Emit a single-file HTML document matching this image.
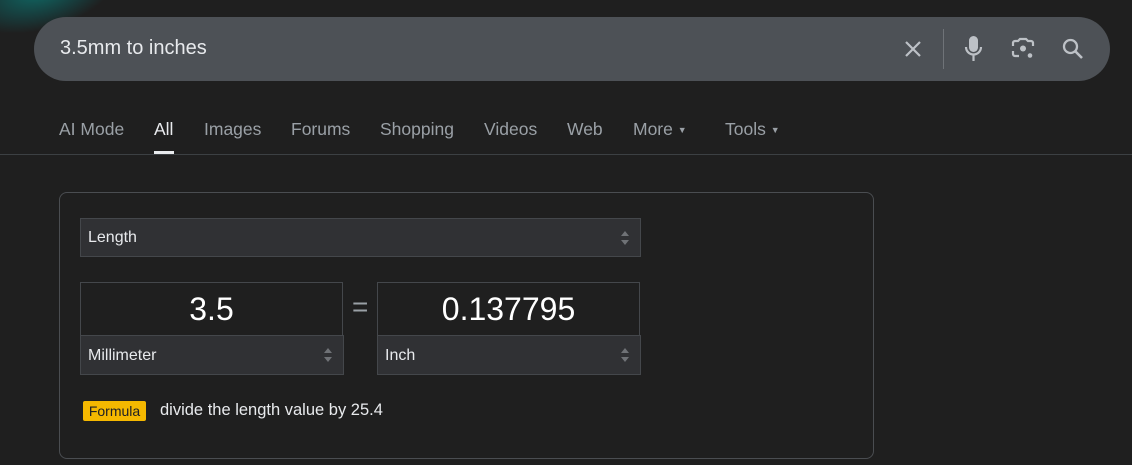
<!DOCTYPE html>
<html><head><style>
*{margin:0;padding:0;box-sizing:border-box}
body{width:1132px;height:465px;background:#1f1f1f;font-family:"Liberation Sans",Arial,sans-serif;position:relative;overflow:hidden}
.glow{position:absolute;left:-40px;top:-50px;width:160px;height:80px;border-radius:50%;transform:rotate(-15deg);background:radial-gradient(ellipse at center,#0f6a66 0%,rgba(15,90,90,0.45) 45%,rgba(31,31,31,0) 70%)}
.search{position:absolute;left:34px;top:17px;width:1076px;height:64px;border-radius:32px;background:#4d5156}
.q{position:absolute;left:26px;top:20px;font-size:20px;color:#e8eaed}
.sep{position:absolute;left:909px;top:12px;width:1px;height:40px;background:#6f7378}
.tab{position:absolute;top:119px;font-size:17.5px;color:#9aa0a6}
.line{position:absolute;left:0;top:154px;width:1132px;height:1px;background:#3c4043}
.card{position:absolute;left:59px;top:192px;width:815px;height:267px;border:1px solid #4a4d51;border-radius:8px}
.sel{position:absolute;background:#303134;border:1px solid #44474b;color:#e8eaed;font-size:16px}
.arr{position:absolute;right:10px;top:50%;margin-top:-8px;width:10px;height:16px}
.box{position:absolute;background:#1f1f1f;border:1px solid #44474b;color:#fff;font-size:32px;text-align:center}
</style></head><body>
<div class="glow"></div>
<div class="search">
<div class="q">3.5mm to inches</div>
<svg style="position:absolute;left:870px;top:23px" width="18" height="18" viewBox="0 0 18 18"><path d="M2 2L16 16M16 2L2 16" stroke="#bdc1c6" stroke-width="2.2"/></svg>
<div class="sep"></div>
<svg style="position:absolute;left:928px;top:17px" width="24" height="30" viewBox="0 0 24 30"><rect x="7" y="2" width="9" height="16" rx="4.5" fill="#bdc1c6"/><path d="M4 13a7.5 7.5 0 0 0 15 0M11.5 20.5V27" stroke="#bdc1c6" stroke-width="2.2" fill="none"/></svg>
<svg style="position:absolute;left:976px;top:19px" width="26" height="26" viewBox="0 0 26 26"><path d="M3 10V7a2 2 0 0 1 2-2h3l2-2h6l2 2h3a2 2 0 0 1 2 2v3M3 15v3a2 2 0 0 0 2 2h4" stroke="#bdc1c6" stroke-width="2.2" fill="none"/><circle cx="13" cy="12.5" r="3" fill="#bdc1c6"/><circle cx="20" cy="19.5" r="2.3" fill="#bdc1c6"/></svg>
<svg style="position:absolute;left:1027px;top:20px" width="24" height="24" viewBox="0 0 24 24"><circle cx="9.5" cy="9.5" r="6.5" stroke="#bdc1c6" stroke-width="2.3" fill="none"/><path d="M14.5 14.5L21 21" stroke="#bdc1c6" stroke-width="2.6"/></svg>
</div>
<div class="tab" style="left:59px">AI Mode</div>
<div class="tab" style="left:154px;color:#e8eaed">All</div>
<div style="position:absolute;left:154px;top:151px;width:20px;height:3px;background:#e8eaed"></div>
<div class="tab" style="left:204px">Images</div>
<div class="tab" style="left:291px">Forums</div>
<div class="tab" style="left:380px">Shopping</div>
<div class="tab" style="left:484px">Videos</div>
<div class="tab" style="left:567px">Web</div>
<div class="tab" style="left:633px">More <span style="font-size:9px;position:relative;top:-2px">▼</span></div>
<div class="tab" style="left:725px">Tools <span style="font-size:9px;position:relative;top:-2px">▼</span></div>
<div class="line"></div>
<div class="card"></div>
<div class="sel" style="left:80px;top:218px;width:561px;height:39px;padding:10px 7px">Length<svg class="arr" viewBox="0 0 10 16"><path d="M1 6L5 1L9 6ZM1 10L5 15L9 10Z" fill="#6f7276"/></svg></div>
<div class="box" style="left:80px;top:282px;width:263px;height:55px;line-height:52px">3.5</div>
<div class="sel" style="left:80px;top:335px;width:264px;height:40px;padding:11px 7px">Millimeter<svg class="arr" viewBox="0 0 10 16"><path d="M1 6L5 1L9 6ZM1 10L5 15L9 10Z" fill="#6f7276"/></svg></div>
<div style="position:absolute;left:352px;top:291px;font-size:28px;color:#9aa0a6">=</div>
<div class="box" style="left:377px;top:282px;width:263px;height:55px;line-height:52px">0.137795</div>
<div class="sel" style="left:377px;top:335px;width:264px;height:40px;padding:11px 7px">Inch<svg class="arr" viewBox="0 0 10 16"><path d="M1 6L5 1L9 6ZM1 10L5 15L9 10Z" fill="#6f7276"/></svg></div>
<div style="position:absolute;left:83px;top:401px;width:63px;height:20px;background:#f5b800;border-radius:2px;color:#202124;font-size:14px;line-height:20px;text-align:center">Formula</div>
<div style="position:absolute;left:160px;top:401px;font-size:16.5px;color:#e8eaed">divide the length value by 25.4</div>
</body></html>
